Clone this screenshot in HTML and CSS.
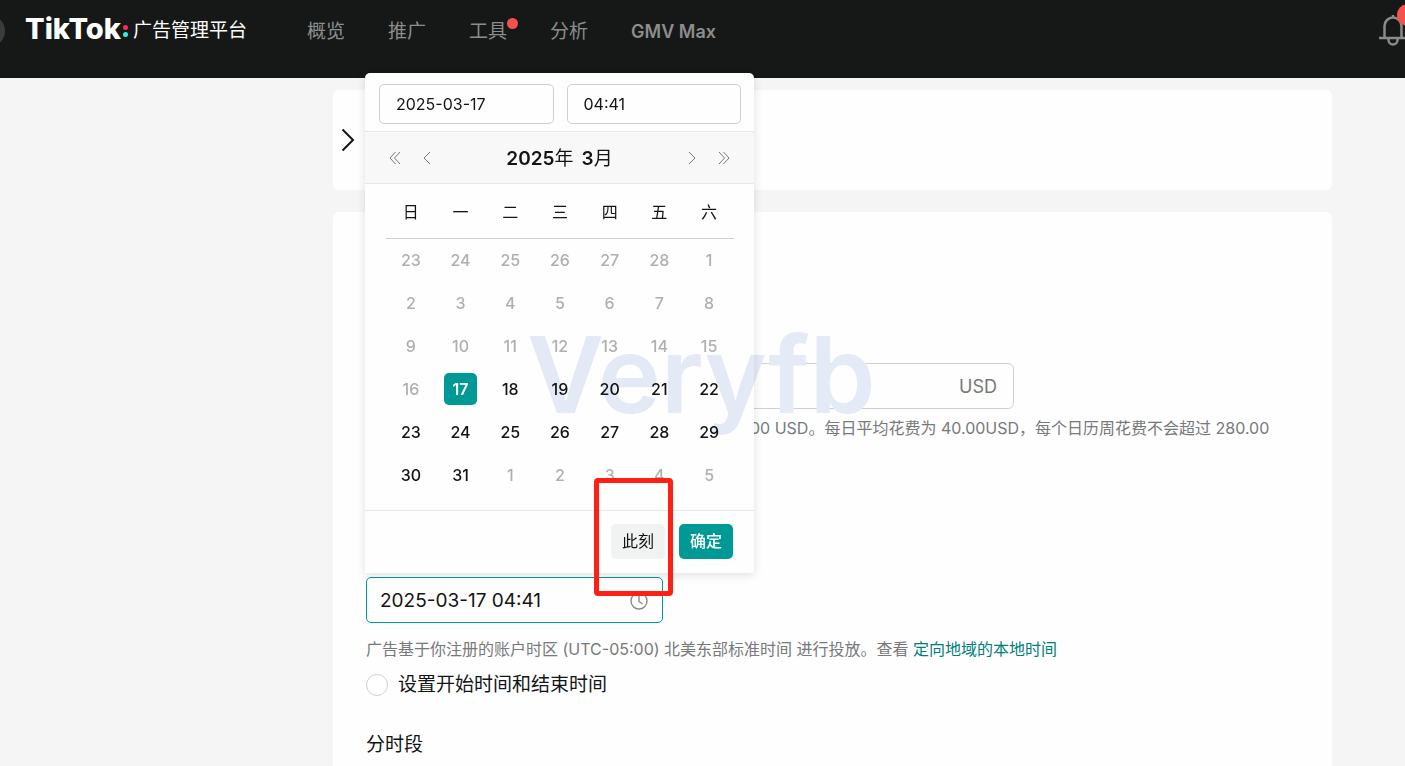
FILE: index.html
```html
<!DOCTYPE html>
<html lang="zh-CN">
<head>
  <meta charset="UTF-8" />
  <meta name="viewport" content="width=device-width, initial-scale=1.0"/>
  <title>TikTok 广告管理平台</title>
  <link rel="stylesheet" href="styles.css">
</head>
<body>

  <header class="topbar">
    <span class="avatar"></span>
    <a class="brand" href="#">
      <span class="brand-name">TikTok</span>
      <span class="brand-dots"><i class="dot-red"></i><i class="dot-cyan"></i></span>
      <span class="brand-sub">广告管理平台</span>
    </a>
    <nav class="nav">
      <a href="#">概览</a>
      <a href="#">推广</a>
      <a href="#" class="has-dot">工具</a>
      <a href="#">分析</a>
      <a href="#" class="nav-latin">GMV Max</a>
    </nav>
    <button class="bell" aria-label="通知">
      <svg width="28" height="34" viewBox="0 0 28 34" fill="none" stroke="#8a8b8b" stroke-width="2.500">
        <path d="M5.500 23V12a8.500 8.500 0 0 1 17 0v11"/>
        <path d="M14 1v3"/>
        <path d="M0 24h28"/>
        <path d="M9.500 25v1a4.500 4.500 0 0 0 9 0v-1"/>
      </svg>
      <span class="bell-badge"></span>
    </button>
  </header>

  <main class="main">
    <section class="card card-collapsed">
      <button class="expand" aria-label="展开">
        <svg width="14" height="24" viewBox="0 0 14 24" fill="none" stroke="#121415" stroke-width="2">
          <path d="M1.500 1.500 12 12 1.500 22.500"/>
        </svg>
      </button>
    </section>

    <section class="card card-form">
      <div class="budget">
        <input type="text" class="budget-input" aria-label="USD">
        <span class="budget-unit">USD</span>
      </div>
      <p class="hint budget-hint">00 USD。每日平均花费为 40.00USD，每个日历周花费不会超过 280.00</p>

      <div class="datetime">
        <input type="text" class="datetime-input" value="2025-03-17 04:41" aria-label="开始时间">
        <svg class="clock" width="18" height="18" viewBox="0 0 18 18" fill="none" stroke="#8a8b8c" stroke-width="1.400">
          <circle cx="9" cy="9" r="8"/>
          <path d="M9 4v5.500l3.500 2.500"/>
        </svg>

        <div class="picker">
          <div class="picker-inputs">
            <input type="text" value="2025-03-17" aria-label="日期">
            <input type="text" value="04:41" aria-label="时间">
          </div>
          <div class="picker-head">
            <button aria-label="上一年"><svg width="12" height="14" viewBox="0 0 12 14"><path d="M6.500 1 1 7l5.500 6M11 1 5.500 7l5.500 6"/></svg></button>
            <button aria-label="上个月"><svg width="12" height="14" viewBox="0 0 12 14"><path d="M9 1 3 7l6 6"/></svg></button>
            <span class="picker-title"><span>2025<span class="zh">年</span></span><span>3<span class="zh">月</span></span></span>
            <button aria-label="下个月"><svg width="12" height="14" viewBox="0 0 12 14"><path d="M3 1l6 6-6 6"/></svg></button>
            <button aria-label="下一年"><svg width="12" height="14" viewBox="0 0 12 14"><path d="M1 1l5.500 6L1 13M5.500 1 11 7l-5.500 6"/></svg></button>
          </div>
          <div class="picker-body">
            <table class="calendar">
              <thead>
                <tr><th>日</th><th>一</th><th>二</th><th>三</th><th>四</th><th>五</th><th>六</th></tr>
              </thead>
              <tbody>
                <tr class="off"><td><button>23</button></td><td><button>24</button></td><td><button>25</button></td><td><button>26</button></td><td><button>27</button></td><td><button>28</button></td><td><button>1</button></td></tr>
                <tr class="off"><td><button>2</button></td><td><button>3</button></td><td><button>4</button></td><td><button>5</button></td><td><button>6</button></td><td><button>7</button></td><td><button>8</button></td></tr>
                <tr class="off"><td><button>9</button></td><td><button>10</button></td><td><button>11</button></td><td><button>12</button></td><td><button>13</button></td><td><button>14</button></td><td><button>15</button></td></tr>
                <tr><td class="off"><button>16</button></td><td class="selected"><button>17</button></td><td><button>18</button></td><td><button>19</button></td><td><button>20</button></td><td><button>21</button></td><td><button>22</button></td></tr>
                <tr><td><button>23</button></td><td><button>24</button></td><td><button>25</button></td><td><button>26</button></td><td><button>27</button></td><td><button>28</button></td><td><button>29</button></td></tr>
                <tr><td><button>30</button></td><td><button>31</button></td><td class="off"><button>1</button></td><td class="off"><button>2</button></td><td class="off"><button>3</button></td><td class="off"><button>4</button></td><td class="off"><button>5</button></td></tr>
              </tbody>
            </table>
          </div>
          <div class="picker-foot">
            <button class="btn">此刻</button>
            <button class="btn btn-primary">确定</button>
          </div>
          <div class="highlight"></div>
          <div class="watermark">Veryfb</div>
        </div>
      </div>

      <p class="hint">广告基于你注册的账户时区 (UTC-05:00) 北美东部标准时间 进行投放。查看 <a href="#">定向地域的本地时间</a></p>

      <label class="radio">
        <input type="radio" name="schedule">
        <span>设置开始时间和结束时间</span>
      </label>

      <h2 class="section-title">分时段</h2>
    </section>
  </main>

</body>
</html>
```

FILE: styles.css
```css
* {
  box-sizing: border-box;
}

body {
  margin: 0;
  height: 100vh;
  overflow: hidden;
  display: flex;
  flex-direction: column;
  background: #f5f5f5;
  color: #121415;
  font-family: Inter, "Noto Sans CJK SC", sans-serif;
  font-size: 16px;
}

button, input {
  font-family: inherit;
  color: inherit;
}

button {
  padding: 0;
  border: none;
  background: none;
  cursor: pointer;
}

a {
  color: inherit;
  text-decoration: none;
}

/* top bar */
.topbar {
  flex: none;
  display: flex;
  align-items: center;
  height: 78px;
  padding-bottom: 16px;
  background: #161818;
  overflow: hidden;
}

.avatar {
  flex: none;
  width: 32px;
  height: 32px;
  margin-left: -27px;
  border-radius: 50%;
  background: #3a3b3b;
}

.brand {
  display: flex;
  align-items: center;
  width: 282px;
  margin-left: 20px;
  padding-bottom: 4px;
  color: #fff;
  white-space: nowrap;
}

.brand-name {
  font-size: 29px;
  font-weight: 800;
  line-height: 32px;
}

.brand-dots {
  display: flex;
  flex-direction: column;
  gap: 2px;
  margin: 4px 5px 0 2px;
}

.brand-dots i {
  width: 5px;
  height: 5px;
  border-radius: 50%;
}

.dot-red { background: #fe2c55; }
.dot-cyan { background: #25f4ee; }

.brand-sub {
  padding-bottom: 2px;
  font-size: 19px;
}

.nav {
  display: flex;
  gap: 43px;
  padding-top: 2px;
  color: #8c8d8d;
  font-size: 19px;
  line-height: 28px;
}

.nav-latin {
  font-size: 18px;
  font-weight: 600;
}

.has-dot {
  position: relative;
}

.has-dot::after {
  content: "";
  position: absolute;
  top: 0;
  right: -11px;
  width: 11px;
  height: 11px;
  border-radius: 50%;
  background: #f4524d;
}

.bell {
  position: relative;
  width: 28px;
  height: 34px;
  margin-left: auto;
  margin-right: -2px;
}

.bell-badge {
  position: absolute;
  top: -10px;
  left: 18px;
  width: 22px;
  height: 22px;
  border-radius: 50%;
  background: #f4524d;
}

/* page */
.main {
  flex: 1;
  display: flex;
  flex-direction: column;
  gap: 22px;
  padding: 12px 73px 0 333px;
}

.card {
  background: #fefefe;
  border-radius: 6px;
}

.card-collapsed {
  display: flex;
  align-items: center;
  height: 100px;
  padding-left: 8px;
}

.card-form {
  flex: 1;
  padding: 151px 33px 0;
  border-radius: 6px 6px 0 0;
}

.expand svg {
  display: block;
}

.budget {
  display: flex;
  align-items: center;
  max-width: 648px;
  height: 46px;
  border: 1px solid #cfd0d0;
  border-radius: 6px;
}

.budget-input {
  flex: 1;
  padding: 0 14px;
  border: none;
  outline: none;
  background: none;
  font-size: 18px;
}

.budget-unit {
  padding-right: 16px;
  color: #76787a;
  font-size: 18px;
}

.hint {
  margin: 0;
  color: #77797a;
  font-size: 16px;
  line-height: 24px;
  white-space: nowrap;
}

.hint a {
  color: #008078;
}

.budget-hint {
  margin-top: 7px;
  padding-left: 384px;
}

.datetime {
  position: relative;
  width: 297px;
  margin-top: 137px;
  margin-bottom: 14px;
}

.datetime-input {
  display: block;
  width: 100%;
  height: 46px;
  padding: 0 13px;
  border: 1px solid #009995;
  border-radius: 5px;
  outline: none;
  background: #fefefe;
  font-size: 19px;
}

.clock {
  position: absolute;
  top: 15px;
  right: 15px;
}

.radio {
  display: flex;
  align-items: center;
  gap: 10px;
  margin-top: 10px;
  font-size: 19px;
  line-height: 28px;
}

.radio input {
  appearance: none;
  width: 22px;
  height: 22px;
  margin: 0;
  border: 1px solid #cfd0d0;
  border-radius: 50%;
  background: #fff;
}

.section-title {
  margin: 32px 0 0;
  font-size: 19px;
  font-weight: 400;
  line-height: 28px;
}

/* date picker */
.picker {
  position: absolute;
  bottom: 50px;
  left: -1px;
  z-index: 2;
  width: 389px;
  background: #fefefe;
  border-radius: 5px 5px 0 0;
  box-shadow: 0 2px 10px rgba(0, 0, 0, 0.12);
}

.picker-inputs {
  display: flex;
  gap: 13px;
  padding: 11px 13px 7px 14px;
}

.picker-inputs input {
  flex: 1;
  min-width: 0;
  height: 40px;
  padding: 0 16px;
  border: 1px solid #cfd0d0;
  border-radius: 5px;
  background: #fefefe;
  font-size: 16px;
}

.picker-head {
  display: flex;
  align-items: center;
  gap: 20px;
  height: 53px;
  padding: 0 24px;
  border-top: 1px solid #e8e8e8;
  border-bottom: 1px solid #e8e8e8;
  background: #f8f8f8;
}

.picker-head svg {
  display: block;
  fill: none;
  stroke: #77797a;
}

.picker-title {
  flex: 1;
  display: flex;
  justify-content: center;
  gap: 8px;
  padding-bottom: 3px;
  font-size: 19px;
  font-weight: 600;
}

.zh {
  font-weight: 400;
}

.picker-body {
  padding: 0 20px 14px 21px;
}

.calendar {
  width: 100%;
  table-layout: fixed;
  border-collapse: collapse;
}

.calendar th {
  height: 54px;
  padding: 0;
  border-bottom: 1px solid #cfd0d0;
  font-weight: 400;
}

.calendar td {
  height: 43px;
  padding: 0;
  text-align: center;
}

.calendar td button {
  width: 33px;
  height: 32px;
  border-radius: 5px;
  font-size: 16px;
  font-weight: 500;
}

.calendar .off button {
  color: #aeb0b0;
}

.calendar .selected button {
  background: #009995;
  color: #fff;
  font-weight: 600;
}

.picker-foot {
  display: flex;
  justify-content: flex-end;
  gap: 14px;
  padding: 13px 21px 14px;
  border-top: 1px solid #e8e8e8;
}

.btn {
  width: 54px;
  height: 35px;
  padding-bottom: 3px;
  border-radius: 5px;
  background: #f1f2f2;
  font-size: 16px;
}

.btn-primary {
  background: #009995;
  color: #fff;
  font-weight: 500;
}

.highlight {
  position: absolute;
  right: 81px;
  bottom: -23px;
  width: 79px;
  height: 118px;
  border: 5px solid #ff2015;
  border-radius: 4px;
  pointer-events: none;
}

.watermark {
  position: absolute;
  top: 249px;
  left: 162px;
  color: #e5eaf7;
  font-size: 106px;
  font-weight: 600;
  line-height: 106px;
  mix-blend-mode: multiply;
  pointer-events: none;
}
```
